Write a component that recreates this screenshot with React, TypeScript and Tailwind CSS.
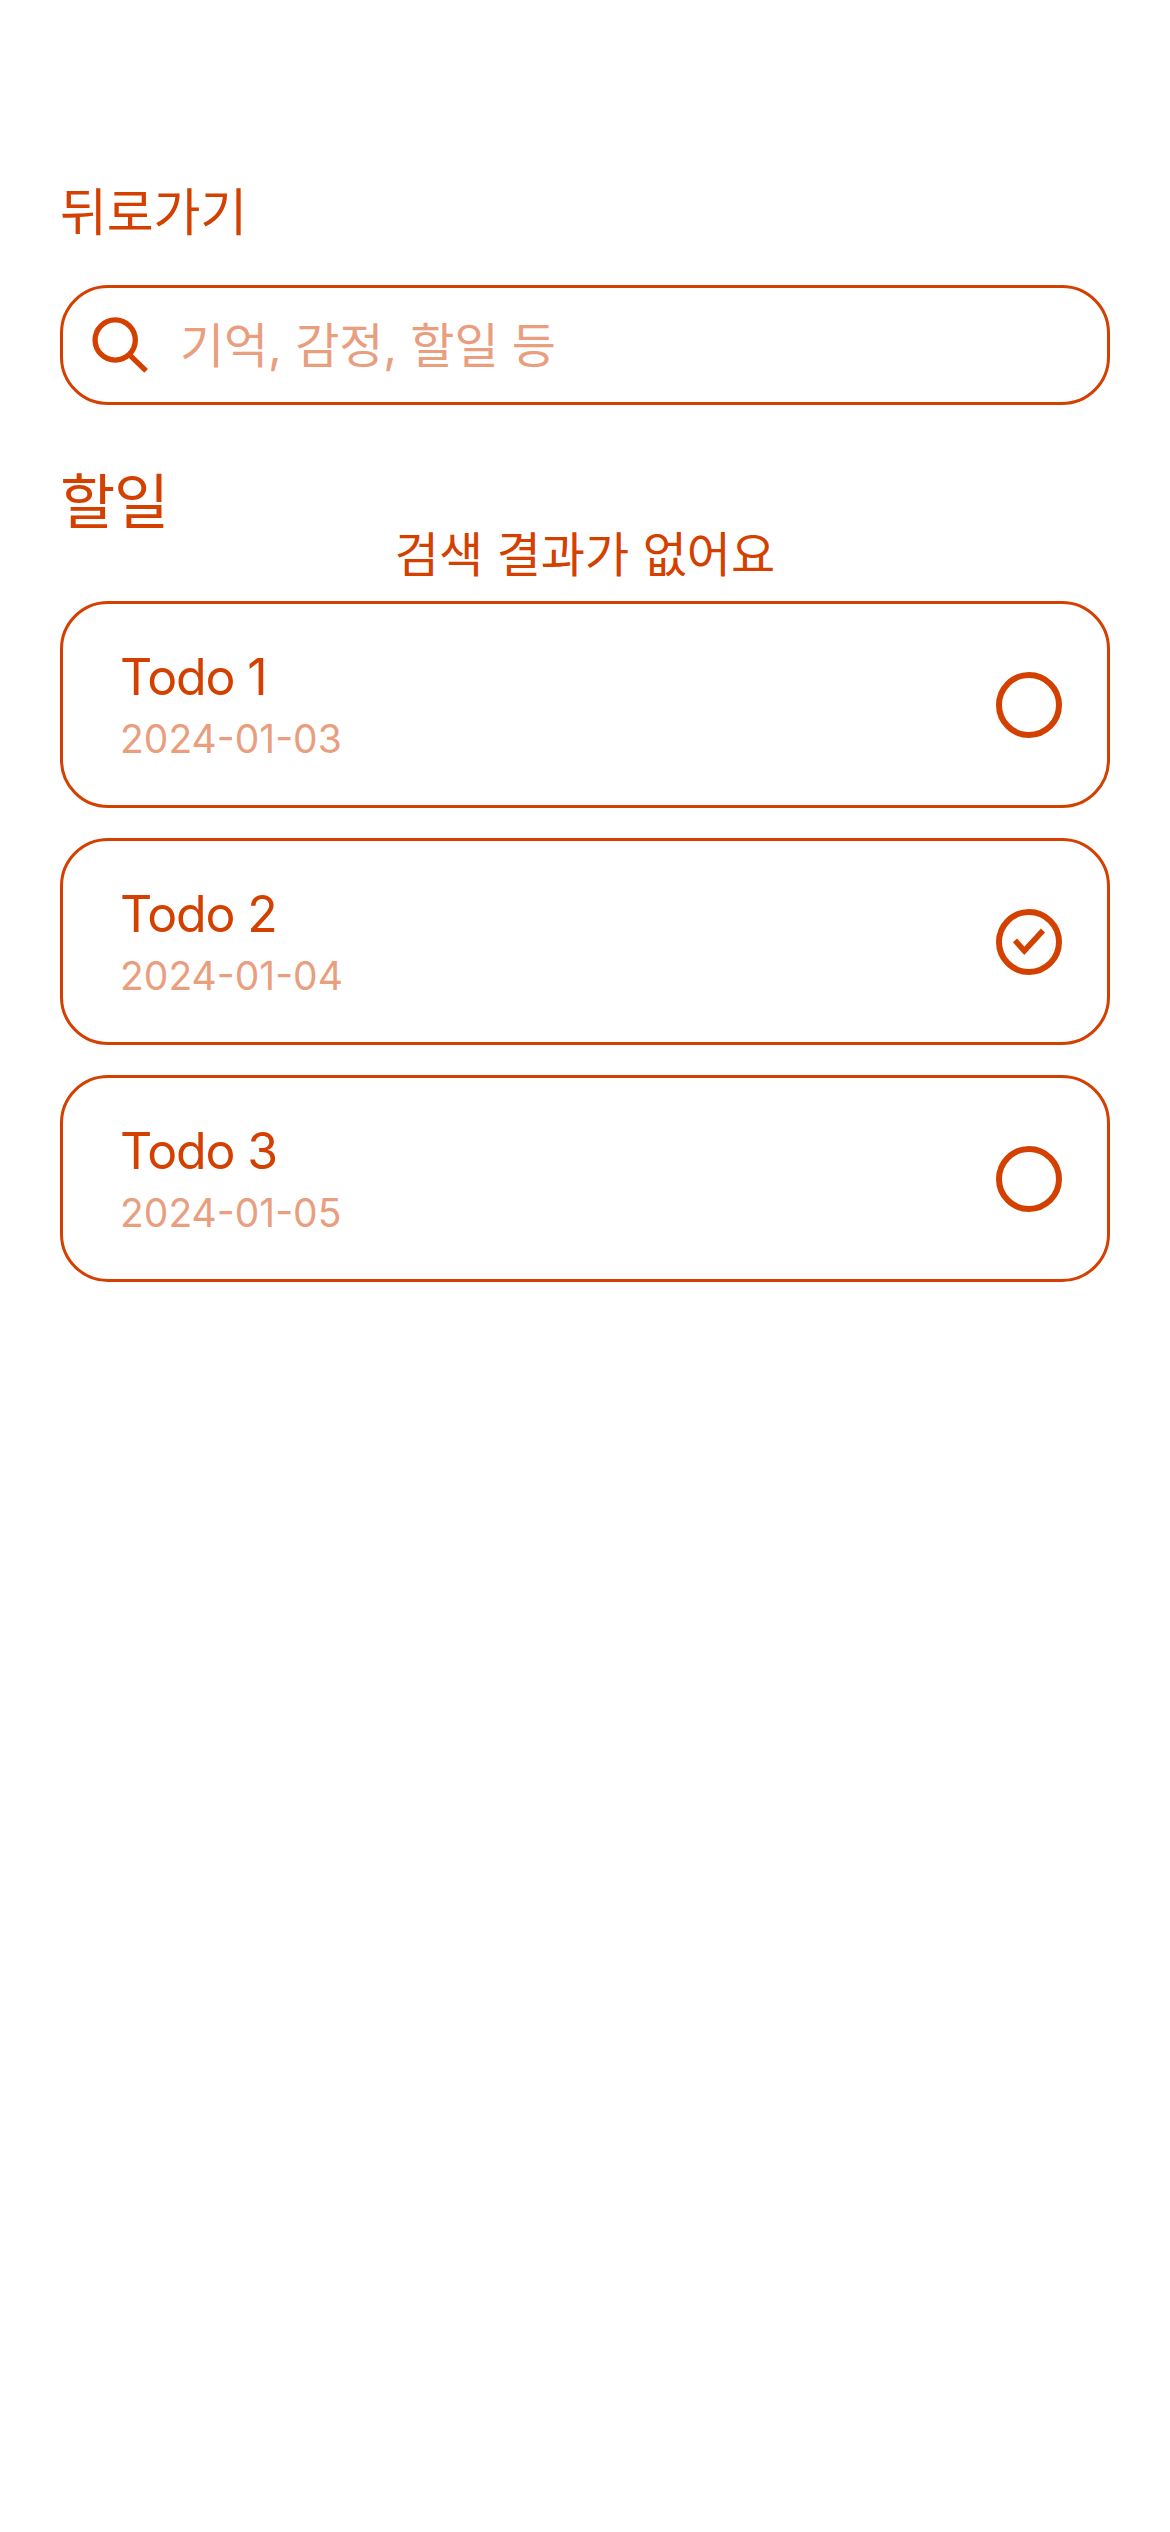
type Todo = { title: string; date: string; done: boolean };

const todos: Todo[] = [
  { title: "Todo 1", date: "2024-01-03", done: false },
  { title: "Todo 2", date: "2024-01-04", done: true },
  { title: "Todo 3", date: "2024-01-05", done: false },
];

function SearchIcon() {
  return (
    <svg className="size-[60px] shrink-0" viewBox="0 0 60 60" fill="none" stroke="currentColor">
      <circle cx="25.2" cy="25" r="20.1" strokeWidth="5.3" />
      <path d="M39 39.3L56.1 55.9" strokeWidth="5.3" />
    </svg>
  );
}

function StatusIcon({ done }: { done: boolean }) {
  return (
    <svg className="size-[66px] shrink-0" viewBox="0 0 66 66" fill="none" stroke="currentColor">
      <circle cx="33" cy="33" r="30" strokeWidth="6" />
      {done && <path d="M19 31.3L28.3 41.8L47 21.5" strokeWidth="5.6" />}
    </svg>
  );
}

function TodoCard({ todo }: { todo: Todo }) {
  return (
    <li className="flex h-[207px] items-center justify-between rounded-[48px] border-[3px] border-[#d44000] pl-[57px] pr-[45px]">
      <div className="flex flex-col pt-[6px]">
        <span className="text-[50px] leading-[62px] tracking-[-1.15px]">{todo.title}</span>
        <span className="text-[39px] leading-[62px] opacity-50">{todo.date}</span>
      </div>
      <StatusIcon done={todo.done} />
    </li>
  );
}

export default function App() {
  return (
    <main className="flex min-h-[2532px] w-full flex-col bg-white px-[60px] pt-[183px] font-['Inter','Noto_Sans_CJK_KR',sans-serif] text-[#d44000]">
      <button className="self-start text-[51px] leading-[60px] tracking-[-0.2px]">뒤로가기</button>
      <label className="mt-[42px] flex h-[120px] items-center rounded-[48px] border-[3px] border-[#d44000] pl-[27px]">
        <SearchIcon />
        <span className="ml-[30px] mt-[2px] text-[48px] leading-[60px] tracking-[-0.12px] opacity-50">기억, 감정, 할일 등</span>
      </label>
      <h1 className="mt-[61px] text-[60px] leading-[72px] tracking-[-1.2px]">할일</h1>
      <p className="-mt-[13px] text-center text-[48px] leading-[60px]">검색 결과가 없어요</p>
      <ul className="mt-[16px] flex flex-col gap-[30px]">
        {todos.map((todo) => (
          <TodoCard key={todo.title} todo={todo} />
        ))}
      </ul>
    </main>
  );
}
